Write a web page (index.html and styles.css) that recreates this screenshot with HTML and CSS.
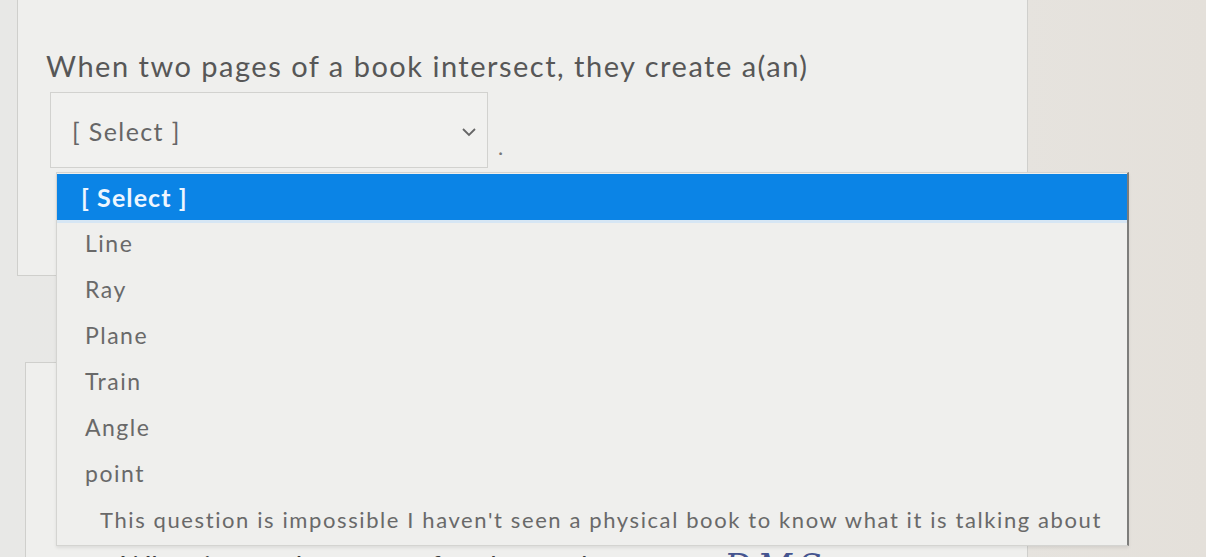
FILE: index.html
```html
<!DOCTYPE html>
<html lang="en">
<head>
<meta charset="utf-8">
<title>Quiz question</title>
<link rel="stylesheet" href="styles.css">
</head>
<body>
<main class="screen">
  <section class="card card-first">
    <p class="question">When two pages of a book intersect, they create a(an)</p>
    <div class="answer-line">
      <div class="select-box">
        <span class="select-value">[ Select ]</span>
        <svg class="chevron" width="16" height="10" viewBox="0 0 16 10"><path d="M2 2 L8 8 L14 2" fill="none" stroke="#666" stroke-width="1.8"/></svg>
      </div>
      <span class="period">.</span>
    </div>
  </section>

  <section class="card card-second">
    <p class="question-next">What is another name for the angle <span class="figure-label">DMS</span></p>
  </section>

  <ul class="dropdown">
    <li class="option option-active">[ Select ]</li>
    <li class="option">Line</li>
    <li class="option">Ray</li>
    <li class="option">Plane</li>
    <li class="option">Train</li>
    <li class="option">Angle</li>
    <li class="option">point</li>
    <li class="option option-long">This question is impossible I haven't seen a physical book to know what it is talking about</li>
  </ul>
</main>
</body>
</html>
```

FILE: styles.css
```css
html, body {
  margin: 0;
  padding: 0;
}

body {
  width: 1206px;
  height: 557px;
  overflow: hidden;
  background: linear-gradient(90deg, #e8e8e6 0%, #e9e8e5 60%, #e4e0da 100%);
  font-family: Lato, "Open Sans", sans-serif;
  color: #5b5b5b;
}

.screen {
  position: relative;
  width: 1206px;
  height: 557px;
  display: flex;
  flex-direction: column;
  gap: 86px;
}

.card {
  background: #efefed;
  border: 1px solid #cfcfcc;
  margin-right: 178px;
}

.card-first {
  flex-shrink: 0;
  margin-left: 17px;
  margin-top: -2px;
  height: 278px;
  border-top: none;
  padding: 0 0 0 28px;
  box-sizing: border-box;
}

.question {
  margin: 50px 0 0 0;
  font-size: 29px;
  line-height: 36px;
  letter-spacing: 1.5px;
  color: #575757;
}

.answer-line {
  display: flex;
  align-items: flex-end;
  margin-top: 8px;
  margin-left: 4px;
}

.select-box {
  width: 438px;
  height: 76px;
  box-sizing: border-box;
  border: 1px solid #d2d2cf;
  background: #f1f1ef;
  display: flex;
  align-items: center;
  justify-content: space-between;
  padding: 0 10px 0 21px;
}

.select-value {
  font-size: 25px;
  letter-spacing: 1.4px;
  color: #666;
  margin-top: 2px;
}

.chevron {
  margin-top: 4px;
}

.period {
  font-size: 22px;
  margin: 0 0 8px 10px;
  color: #777;
}

.card-second {
  margin-left: 25px;
  flex: 1;
  border-bottom: none;
}

.question-next {
  margin: 185px 0 0 95px;
  font-size: 28px;
  line-height: 34px;
  letter-spacing: 1.5px;
  color: #3a3a3a;
  white-space: nowrap;
}

.figure-label {
  margin-left: 110px;
  font-family: "DejaVu Serif", serif;
  font-style: italic;
  font-size: 34px;
  letter-spacing: 6px;
  color: #45548f;
  position: relative;
  top: 1px;
}

.dropdown {
  position: absolute;
  top: 172px;
  left: 56px;
  width: 1070px;
  margin: 0;
  padding: 0 0 3px;
  list-style: none;
  background: #efefed;
  border: 1px solid #d4d4d1;
  border-right: 2px solid #7d7d7b;
  box-shadow: 0 2px 3px rgba(0, 0, 0, 0.08);
}

.option {
  height: 46px;
  display: flex;
  align-items: center;
  padding-left: 28px;
  font-size: 23px;
  letter-spacing: 1.5px;
  color: #696969;
  white-space: nowrap;
}

.option-active {
  margin-top: 1px;
  background: #0b84e6;
  color: #eef6ff;
  font-weight: 700;
  font-size: 25px;
  letter-spacing: 1.1px;
  padding-left: 24px;
  box-shadow: 0 3px 0 #d6e6f4;
}

.option-long {
  font-size: 22px;
  letter-spacing: 1.6px;
  padding-left: 43px;
}
```
